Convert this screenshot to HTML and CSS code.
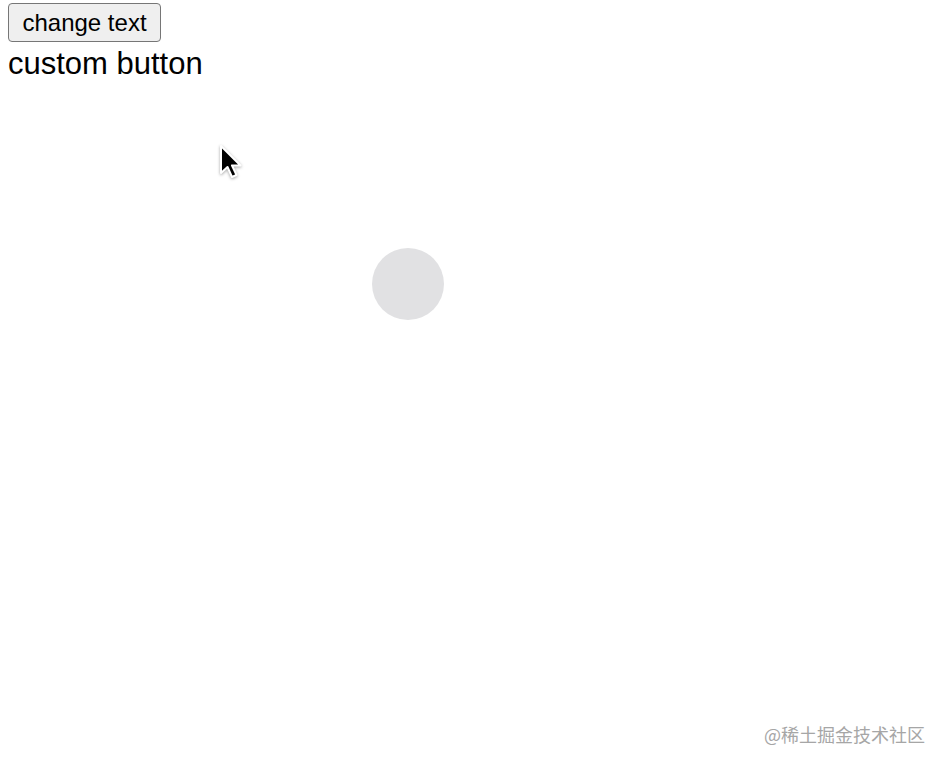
FILE: index.html
```html
<!DOCTYPE html>
<html lang="zh">
<head>
<meta charset="utf-8">
<link rel="stylesheet" href="styles.css">
</head>
<body>
<div class="page">
  <button class="btn">change text</button>
  <div class="label">custom button</div>
</div>
<div class="ripple"></div>
<svg class="cursor" width="24" height="36" viewBox="0 0 24 36">
  <path d="M2 1 L2 28 L8.5 22 L13 32 L17.5 30 L13 20.5 L21.5 20.5 Z" fill="#000" stroke="#fff" stroke-width="2" stroke-linejoin="round"/>
</svg>
<div class="watermark">@稀土掘金技术社区</div>
</body>
</html>
```
FILE: styles.css
```css
html, body {
  margin: 0;
  padding: 0;
  background: #fff;
  width: 946px;
  height: 764px;
  overflow: hidden;
  position: relative;
}
.page {
  padding: 3px 8px;
  display: flex;
  flex-direction: column;
  align-items: flex-start;
  font-family: "Liberation Sans", Arial, sans-serif;
}
.btn {
  font-family: "Liberation Sans", Arial, sans-serif;
  font-size: 24px;
  color: #000;
  width: 153px;
  height: 39px;
  padding: 0;
  background: #efefef;
  border: 1px solid #767676;
  border-radius: 4px;
  line-height: 1;
}
.label {
  font-size: 31px;
  color: #000;
  line-height: 1;
  margin-top: 6px;
}
.ripple {
  position: absolute;
  left: 372px;
  top: 248px;
  width: 72px;
  height: 72px;
  border-radius: 50%;
  background: #e1e1e3;
}
.cursor {
  position: absolute;
  left: 219px;
  top: 145px;
  filter: drop-shadow(0 1px 1.5px rgba(0,0,0,0.35));
}
.watermark {
  position: absolute;
  right: 21px;
  top: 722px;
  font-family: "Noto Sans CJK SC", "Liberation Sans", sans-serif;
  font-size: 18px;
  line-height: 24px;
  color: #a6a6a6;
}
```
